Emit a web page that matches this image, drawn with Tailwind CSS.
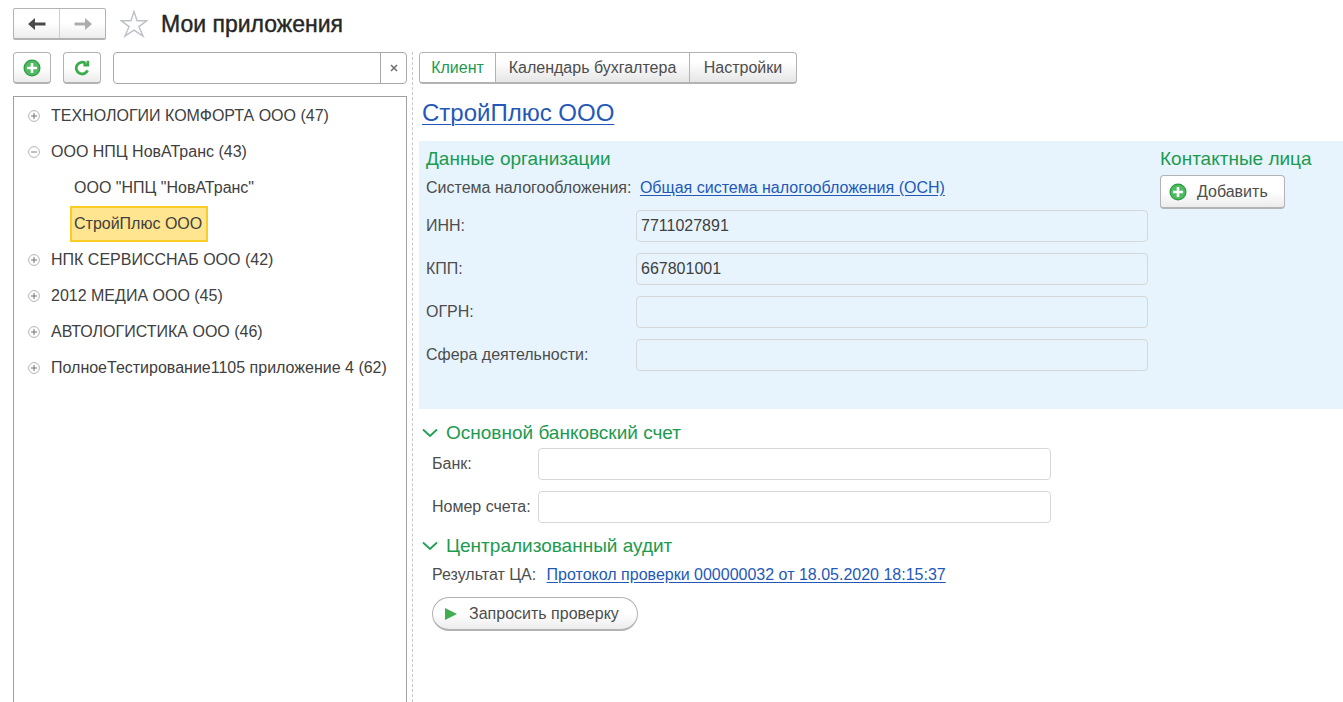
<!DOCTYPE html>
<html lang="ru">
<head>
<meta charset="utf-8">
<meta name="viewport" content="width=device-width, initial-scale=1">
<title>Мои приложения</title>
<script src="https://cdn.jsdelivr.net/npm/@tailwindcss/browser@4"></script>
</head>
<body class="flex h-screen flex-col overflow-hidden bg-white font-['Liberation_Sans',Arial,sans-serif] text-base leading-5 text-[#4d4d4d]">
<svg class="hidden" aria-hidden="true">
  <symbol id="add" viewBox="0 0 18 18"><circle cx="9" cy="9" r="8.5" fill="#2c9c41"/><circle cx="9" cy="9" r="7.3" fill="#4fbb60"/><path d="M9 4v10M4 9h10" stroke="#fff" stroke-width="2.6"/></symbol>
  <symbol id="plus" viewBox="0 0 12 12"><circle cx="6" cy="6" r="5.4" fill="#fff" stroke="#b4b4b4"/><path d="M6 3v6M3 6h6" stroke="#707070"/></symbol>
  <symbol id="minus" viewBox="0 0 12 12"><circle cx="6" cy="6" r="5.4" fill="#fff" stroke="#b4b4b4"/><path d="M3 6h6" stroke="#808080"/></symbol>
  <symbol id="chevron" viewBox="0 0 16 10"><path d="M1 1.5l7 6.5 7-6.5" fill="none" stroke="#1f9f55" stroke-width="1.8"/></symbol>
</svg>

<header class="flex shrink-0 items-center pt-2 pl-[13px]">
  <div class="flex h-8 w-[93px] rounded-xs border border-b-2 border-[#b3b3b3] bg-linear-to-b from-white from-50% to-[#ececec]">
    <button type="button" aria-label="Назад" class="flex flex-1 items-center justify-center border-r border-[#cfcfcf]">
      <svg class="h-3.5 w-[18px]" viewBox="0 0 18 14"><path d="M0 7l7-6v4.5h10.5v3H7V13z" fill="#4a4a4a"/></svg>
    </button>
    <button type="button" aria-label="Вперед" class="flex flex-1 items-center justify-center">
      <svg class="h-3.5 w-[18px]" viewBox="0 0 18 14"><path d="M18 7l-7-6v4.5H.5v3H11V13z" fill="#adadad"/></svg>
    </button>
  </div>
  <button type="button" aria-label="В избранное" class="ml-3.5">
    <svg class="h-7 w-7" viewBox="0 0 28 28"><path d="M14 1.5l3.1 9.3h9.6l-7.8 5.8 4.2 9.6L14 20.2l-9.1 6 4.2-9.6L1.3 10.8h9.6z" fill="none" stroke="#bcc2c8" stroke-width="1.4"/></svg>
  </button>
  <h1 class="ml-[13px] text-[23px] leading-8 text-[#262626] [-webkit-text-stroke:0.4px_#262626]">Мои приложения</h1>
</header>

<div class="mt-3 flex min-h-0 flex-1">
  <aside class="flex w-[394px] shrink-0 flex-col ml-[13px]">
    <div class="flex gap-3">
      <button type="button" aria-label="Добавить приложение" class="flex h-8 w-[38px] items-center justify-center rounded-sm border border-b-2 border-[#b3b3b3] bg-linear-to-b from-white from-50% to-[#ececec]"><svg class="size-[18px]"><use href="#add"/></svg></button>
      <button type="button" aria-label="Обновить" class="flex h-8 w-[38px] items-center justify-center rounded-sm border border-b-2 border-[#b3b3b3] bg-linear-to-b from-white from-50% to-[#ececec]">
        <svg class="size-4" viewBox="0 0 16 16"><path d="M11.6 3.3A5.9 5.9 0 1 0 13.6 10.4" fill="none" stroke="#3bac4c" stroke-width="2.8"/><path d="M15.2.8v5.8H9.4V3.6l3.2-.4V.8z" fill="#3bac4c"/></svg>
      </button>
      <div class="flex h-8 flex-1 overflow-hidden rounded-sm border border-[#a8a8a8]">
        <input type="text" aria-label="Поиск" class="min-w-0 flex-1 px-1 outline-none">
        <button type="button" aria-label="Очистить" class="flex w-[26px] items-center justify-center border-l border-[#a8a8a8]"><svg class="size-2" viewBox="0 0 8 8"><path d="M1 1l6 6M7 1L1 7" stroke="#707070" stroke-width="1.6"/></svg></button>
      </div>
    </div>
    <ul class="mt-3 min-h-0 flex-1 border border-b-0 border-[#a0a0a0] pt-px text-[#404040] whitespace-nowrap">
      <li class="flex h-9 items-center gap-[11px] pl-3.5"><svg class="size-3"><use href="#plus"/></svg>ТЕХНОЛОГИИ КОМФОРТА ООО (47)</li>
      <li>
        <div class="flex h-9 items-center gap-[11px] pl-3.5"><svg class="size-3"><use href="#minus"/></svg>ООО НПЦ НовАТранс (43)</div>
        <ul class="pl-14">
          <li class="flex h-9 items-center pl-1">ООО "НПЦ "НовАТранс"</li>
          <li class="flex h-9 w-fit items-center border-2 border-[#facc26] bg-[#ffe58f] pr-1 pl-0.5">СтройПлюс ООО</li>
        </ul>
      </li>
      <li class="flex h-9 items-center gap-[11px] pl-3.5"><svg class="size-3"><use href="#plus"/></svg>НПК СЕРВИССНАБ ООО (42)</li>
      <li class="flex h-9 items-center gap-[11px] pl-3.5"><svg class="size-3"><use href="#plus"/></svg>2012 МЕДИА ООО (45)</li>
      <li class="flex h-9 items-center gap-[11px] pl-3.5"><svg class="size-3"><use href="#plus"/></svg>АВТОЛОГИСТИКА ООО (46)</li>
      <li class="flex h-9 items-center gap-[11px] pl-3.5"><svg class="size-3"><use href="#plus"/></svg>ПолноеТестирование1105 приложение 4 (62)</li>
    </ul>
  </aside>

  <main class="ml-[5px] min-w-0 flex-1 border-l border-dashed border-[#c8c8c8] pl-1.5">
    <nav class="flex h-8 w-fit overflow-hidden rounded-sm border border-b-2 border-[#b3b3b3] bg-linear-to-b from-white from-30% to-[#e6e6e6]">
      <button type="button" class="w-[75px] bg-white text-[#1c9a50]">Клиент</button>
      <button type="button" class="w-[194px] border-l border-[#b3b3b3]">Календарь бухгалтера</button>
      <button type="button" class="w-[107px] border-l border-[#b3b3b3]">Настройки</button>
    </nav>

    <h2 class="mt-[15px] ml-[3px] text-2xl leading-7"><a href="#" class="text-[#2458b8] underline decoration-1 underline-offset-3">СтройПлюс ООО</a></h2>

    <section class="mt-3.5 flex bg-[#e7f4fe] pt-1.5 pb-[38px] pl-[7px]">
      <div class="w-[722px]">
        <h3 class="text-[19px] leading-6 text-[#1c9a50]">Данные организации</h3>
        <p class="mt-[7px]">Система налогообложения: <a href="#" class="ml-1 text-[#2458b8] underline underline-offset-2">Общая система налогообложения (ОСН)</a></p>
        <div class="mt-3 grid grid-cols-[210px_1fr] items-center gap-y-[11px]">
          <label for="inn">ИНН:</label><input id="inn" value="7711027891" readonly class="h-8 rounded-sm border border-[#d5d7d9] px-1 text-[#404040]">
          <label for="kpp">КПП:</label><input id="kpp" value="667801001" readonly class="h-8 rounded-sm border border-[#d5d7d9] px-1 text-[#404040]">
          <label for="ogrn">ОГРН:</label><input id="ogrn" readonly class="h-8 rounded-sm border border-[#d5d7d9] px-1 text-[#404040]">
          <label for="area">Сфера деятельности:</label><input id="area" readonly class="h-8 rounded-sm border border-[#d5d7d9] px-1 text-[#404040]">
        </div>
      </div>
      <div class="ml-3">
        <h3 class="text-[19px] leading-6 text-[#1c9a50]">Контактные лица</h3>
        <button type="button" class="mt-1 flex h-[34px] w-[125px] items-center gap-2.5 rounded-sm border border-b-2 border-[#b3b3b3] bg-linear-to-b from-white from-50% to-[#ececec] pl-2"><svg class="size-[18px]"><use href="#add"/></svg>Добавить</button>
      </div>
    </section>

    <section class="mt-3 pl-[3px]">
      <h3 class="flex items-center gap-2 text-[19px] leading-6 text-[#1c9a50]"><svg class="h-2.5 w-4"><use href="#chevron"/></svg>Основной банковский счет</h3>
      <div class="mt-[3px] grid grid-cols-[106px_513px] items-center gap-y-[11px] pl-2.5">
        <label for="bank">Банк:</label><input id="bank" class="h-8 rounded-sm border border-[#d5d7d9] px-1">
        <label for="account">Номер счета:</label><input id="account" class="h-8 rounded-sm border border-[#d5d7d9] px-1">
      </div>
    </section>

    <section class="mt-[11px] pl-[3px]">
      <h3 class="flex items-center gap-2 text-[19px] leading-6 text-[#1c9a50]"><svg class="h-2.5 w-4"><use href="#chevron"/></svg>Централизованный аудит</h3>
      <div class="pl-2.5">
        <p class="mt-[7px]">Результат ЦА: <a href="#" class="ml-1.5 text-[#2458b8] underline underline-offset-2">Протокол проверки 000000032 от 18.05.2020 18:15:37</a></p>
        <button type="button" class="mt-3 flex h-[34px] w-[206px] items-center gap-3 rounded-full border border-b-2 border-[#b3b3b3] bg-linear-to-b from-white from-50% to-[#ececec] pl-3"><svg class="h-3 w-3" viewBox="0 0 12 12"><path d="M0 0l12 6-12 6z" fill="#43ae4f"/></svg>Запросить проверку</button>
      </div>
    </section>
  </main>
</div>
</body>
</html>
